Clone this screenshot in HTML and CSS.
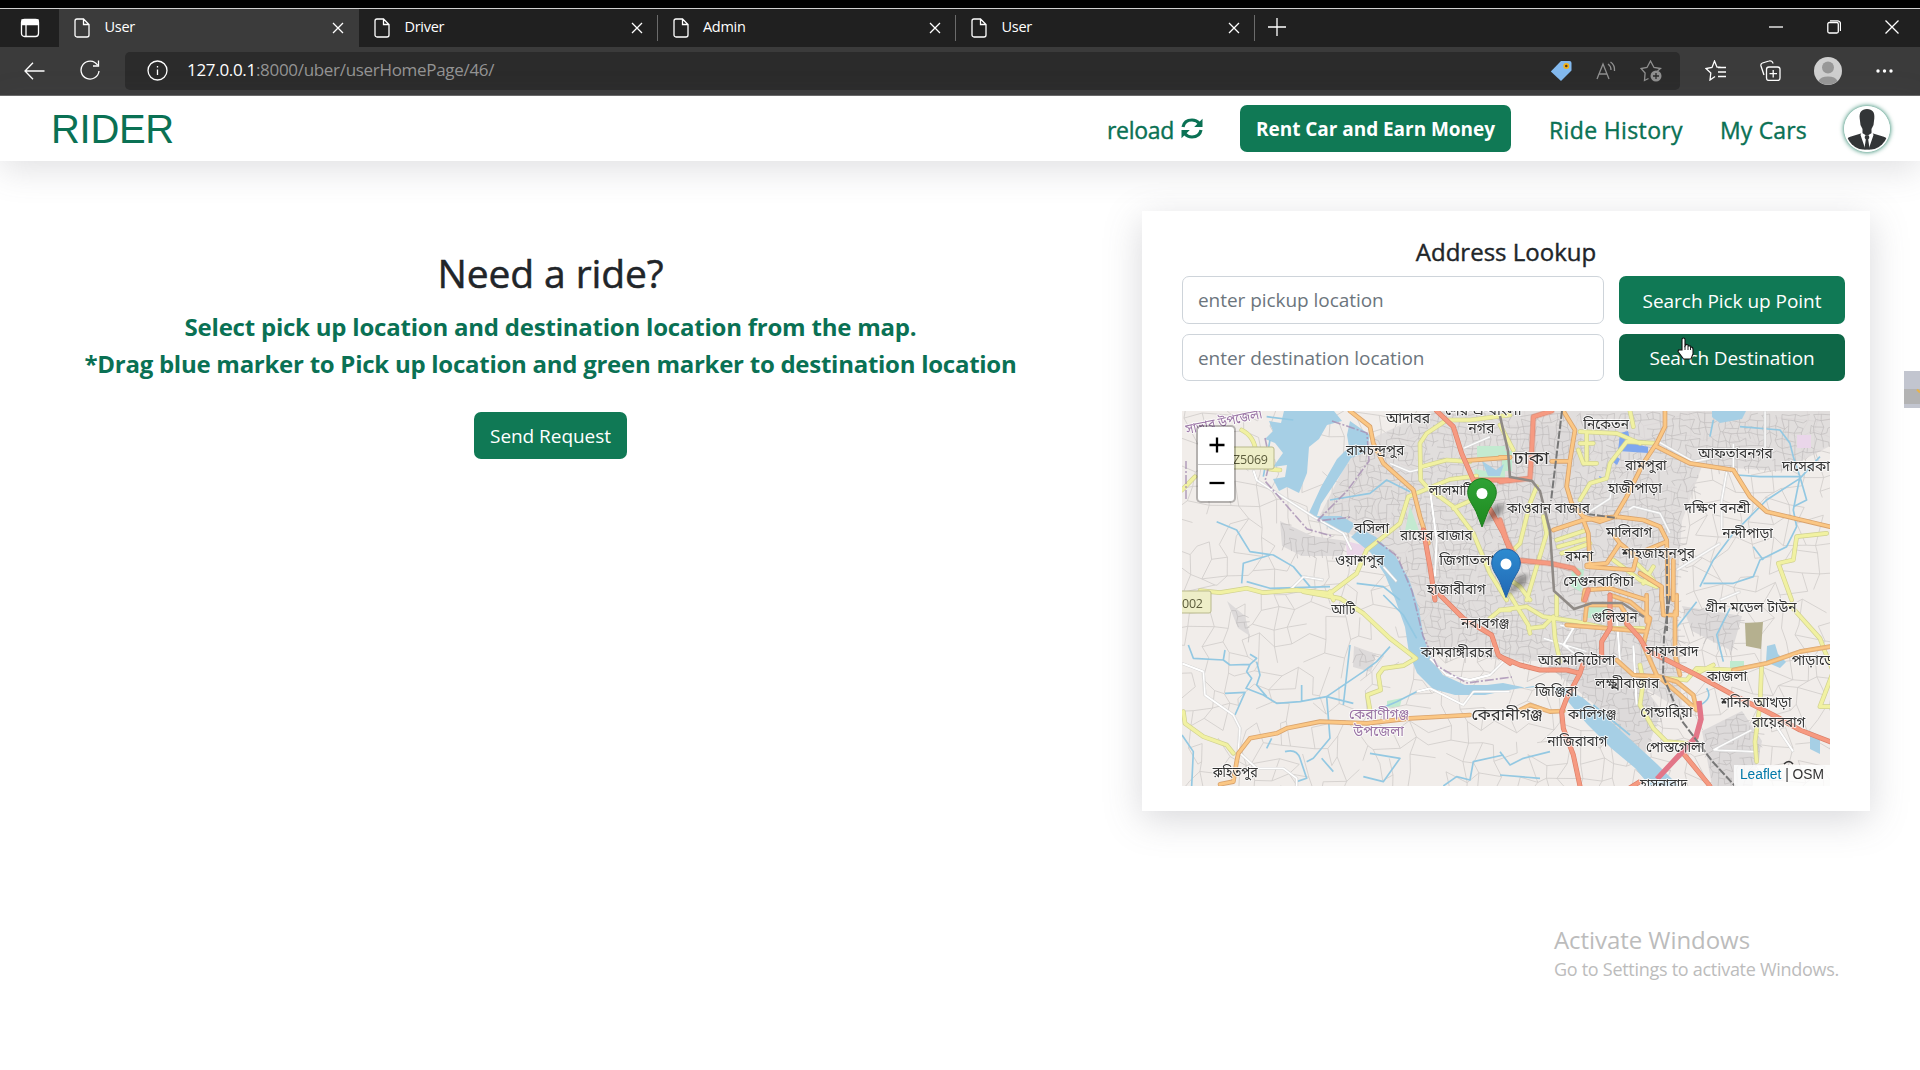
FILE: index.html
```html
<!DOCTYPE html>
<html lang="en">
<head>
<meta charset="utf-8">
<title>User</title>
<link rel="stylesheet" href="styles.css">
</head>
<body>
<svg class="defs" width="0" height="0">
  <symbol id="i-page" viewBox="0 0 16 20"><path d="M3 1h6.5L15 6.5V17a2 2 0 0 1-2 2H3a2 2 0 0 1-2-2V3a2 2 0 0 1 2-2zM9.5 1v5.5H15"/></symbol>
  <symbol id="i-x" viewBox="0 0 12 12"><path d="M1 1l10 10M11 1L1 11"/></symbol>
</svg>
<header class="browser">
  <div class="tabs">
    <div class="tab-menu"><svg class="ic" width="20" height="20" viewBox="0 0 20 20"><rect x="1.5" y="1.5" width="17" height="17" rx="3"/><path d="M2 2h16v4.500H2z" fill="#fff"/><path d="M6 6v12"/></svg></div>
    <div class="tab active"><svg class="ic" width="16" height="20"><use href="#i-page"/></svg><span>User</span><svg class="ic close" width="12" height="12"><use href="#i-x"/></svg></div>
    <div class="tab"><svg class="ic" width="16" height="20"><use href="#i-page"/></svg><span>Driver</span><svg class="ic close" width="12" height="12"><use href="#i-x"/></svg></div>
    <div class="tab"><svg class="ic" width="16" height="20"><use href="#i-page"/></svg><span>Admin</span><svg class="ic close" width="12" height="12"><use href="#i-x"/></svg></div>
    <div class="tab"><svg class="ic" width="16" height="20"><use href="#i-page"/></svg><span>User</span><svg class="ic close" width="12" height="12"><use href="#i-x"/></svg></div>
    <svg class="ic plus" width="18" height="18" viewBox="0 0 18 18"><path d="M9 0v18M0 9h18"/></svg>
    <div class="window-buttons">
      <svg class="ic" width="14" height="14" viewBox="0 0 14 14"><path d="M0 7h14"/></svg>
      <svg class="ic" width="14" height="14" viewBox="0 0 14 14"><rect x=".8" y="2.500" width="10.500" height="10.500" rx="1.500"/><path d="M3 .8h7.500a3 3 0 0 1 3 3V11"/></svg>
      <svg class="ic" width="14" height="14" viewBox="0 0 14 14"><path d="M.5.5l13 13M13.500.5l-13 13"/></svg>
    </div>
  </div>
  <div class="toolbar">
    <svg class="ic back" width="21" height="18" viewBox="0 0 21 18"><path d="M9 .8L1 9l8 8.200M1 9h19.500"/></svg>
    <svg class="ic refresh" width="20" height="21" viewBox="0 0 20 21"><path d="M17.500 5A9 9 0 1 0 19 11M18.500 .5V6H13"/></svg>
    <div class="address">
      <svg class="ic" width="21" height="21" viewBox="0 0 21 21"><circle cx="10.500" cy="10.500" r="9.500"/><path d="M10.500 9.500V15M10.500 6v1.500"/></svg>
      <span class="url"><b>127.0.0.1</b>:8000/uber/userHomePage/46/</span>
      <div class="address-icons">
        <svg width="22" height="22" viewBox="0 0 22 22"><path d="M11 1h8.500A2 2 0 0 1 21.500 3v7.500L11 21 .8 11.500z" fill="#83b9ee"/><circle cx="16.300" cy="6" r="3" fill="#f5b316"/><circle cx="16.300" cy="6" r="1.300" fill="#5a3a10"/></svg>
        <svg class="ic dim" width="20" height="19" viewBox="0 0 20 19"><path d="M1 18L7 3l6 15M3 13h8M12 3q3 2 3 6M14.500 1q4.500 3 4 9"/></svg>
        <svg class="ic dim" width="22" height="22" viewBox="0 0 22 22"><path d="M8.500 18.500L4.500 20.500l.6-7.500L1 8.500l6-1L10.500 1l3.500 6.500 6.500 1-3 2.500"/><circle cx="16" cy="16" r="5.500" fill="#909090" stroke="none"/><path d="M16 13v6M13 16h6" stroke="#2b2b2b"/></svg>
      </div>
    </div>
    <svg class="ic fav" width="21" height="21" viewBox="0 0 21 21"><path d="M10 16.500L5 20l.8-7L1 8.500l6-1L9.500 1 12 7.200h3.500M13 7.500h8M13 12h8M13 16.500h8"/></svg>
    <svg class="ic coll" width="21" height="21" viewBox="0 0 21 21"><path d="M4 15L1 6a2.500 2.500 0 0 1 1.500-3L9 1a3 3 0 0 1 4 2.500"/><rect x="6.500" y="7" width="13.500" height="13.500" rx="2.500"/><path d="M13.200 10v7.500M9.500 13.700H17"/></svg>
    <svg class="profile" width="28" height="28" viewBox="0 0 28 28"><circle cx="14" cy="14" r="14" fill="#cfcfcf"/><circle cx="14" cy="10.500" r="6" fill="#979797"/><path d="M4.500 24a10 6.500 0 0 1 19 0A14 14 0 0 1 4.500 24z" fill="#979797"/></svg>
    <svg class="dots" width="17" height="4" viewBox="0 0 17 4"><g fill="#fff"><circle cx="2" cy="2" r="1.700"/><circle cx="8.500" cy="2" r="1.700"/><circle cx="15" cy="2" r="1.700"/></g></svg>
  </div>
</header>

<nav class="navbar">
  <span class="brand">RIDER</span>
  <div class="nav-links">
    <a class="reload"><span>reload</span><svg width="22" height="21" viewBox="0 0 22 21"><g fill="none" stroke="#0a7154" stroke-width="3.200"><path d="M2 9C3 4 7 2 11 2c3 0 5.500 1.200 7.500 3.500"/><path d="M20 12c-1 5-5 7-9 7-3 0-5.500-1.200-7.500-3.500"/></g><path d="M21.500.8V9h-8.300zM.5 20.200V12h8.300z" fill="#0a7154"/></svg></a>
    <button class="btn rent"><span>Rent Car and Earn Money</span></button>
    <a class="history"><span>Ride History</span></a>
    <a class="cars"><span>My Cars</span></a>
    <svg class="avatar" width="46" height="46" viewBox="0 0 46 46"><defs><clipPath id="disc"><circle cx="23" cy="23" r="21.500"/></clipPath></defs><circle cx="23" cy="23" r="23" fill="#fff"/><g clip-path="url(#disc)"><path d="M23 3c5.500 0 8 3.500 7.300 9.500L29.500 19l-2 4v4l11.500 3.500c4 1.200 5 3.500 5 7.500v5.500H2V38c0-4 1-6.300 5-7.500L18.500 27v-4l-2-4-.8-6.500C15 6.500 17.500 3 23 3z" fill="#333537"/><path d="M17.500 26.500L23 30l5.500-3.500 1 2.500-5 14.500h-3L16.500 29z" fill="#fff"/><path d="M21 29.500h4l.3 2.500-1.100 1.500 1.500 10h-5.400l1.500-10-1.100-1.500z" fill="#333537"/></g></svg>
  </div>
</nav>

<main class="content">
  <section class="intro">
    <h2>Need a ride?</h2>
    <p class="lead">Select pick up location and destination location from the map.</p>
    <p class="hint">*Drag blue marker to Pick up location and green marker to destination location</p>
    <button class="btn send">Send Request</button>
  </section>
  <section class="card">
    <h5>Address Lookup</h5>
    <div class="lookup">
      <div class="field">enter pickup location</div>
      <button class="btn">Search Pick up Point</button>
      <div class="field">enter destination location</div>
      <button class="btn hover">Search Destination</button>
    </div>
    <div class="map">
      <svg width="648" height="375" viewBox="0 0 648 375">
        <defs>
          <g id="secondary">
            <g transform="translate(-12 -11) scale(.3333)">
              <path d="M215 90Q255 110 258 160T330 210M36 270L75 230M1020 45L900 60 830 60 770 100 750 130 752 240 775 265 850 320 910 400 960 520 1010 600M755 200L830 180 900 185M775 265L840 238 920 228M850 325L940 285M775 265L715 290 690 370 590 450 560 520 480 580 380 570 280 578 230 565 150 578 90 572M480 575L490 600"/>
            </g>
            <g transform="translate(318 -11) scale(.3333)">
              <path d="M390 33L400 80M470 130L380 125 330 190 320 235 270 250 240 300M240 95L350 100 420 130M240 130H280M235 150L250 190 290 190M260 100V180M110 260L90 310 60 430 20 470M130 350L140 400 110 500 80 600M0 75L40 150M0 520L60 560 90 600M170 420L260 390M175 440L265 415M185 460L270 430M340 480L420 540 470 560M410 490L460 540M430 550L460 500M980 400L890 410 880 480 835 490 875 600"/>
            </g>
            <g transform="translate(-12 184) scale(.3333)"><path d="M400 -10L510 10 580 55 660 130 738 190 700 212 640 220 625 240 632 285 592 300 600 345M40 350L45 385 100 425 170 450 190 475M960 70L990 45H1020"/></g>
            <g transform="translate(318 184) scale(.3333)"><path d="M0 45L80 35 130 65 230 80 320 100 430 100M30 0L60 50 85 90 90 115M85 100L130 95 160 65 165 130 180 200M170 0V60M420 210L430 260 420 330 460 400 500 440 560 445M500 250L560 255 590 220 700 225M870 30L960 130 975 170 1000 230 960 335 990 335M785 210L780 330 765 440 770 500M640 210L590 235"/></g>
          </g>
          <g id="primary">
            <g transform="translate(-12 -11) scale(.3333)"><path d="M540 33L600 80 610 130 640 190 730 270 750 350 775 430M885 182L1020 172"/></g>
            <g transform="translate(318 -11) scale(.3333)"><path d="M0 172H30M155 184H210M190 33L225 90 210 180 200 260 215 310 250 350 300 365 345 350 380 290 430 190 470 130 495 80V33M470 140L570 190 700 210 750 290 800 335 990 380M160 390L250 360 300 355 350 350 430 360 480 380 500 420 505 600M520 480V600M250 360L265 400 270 490M260 495L320 490 360 430 345 410M360 430L410 470 400 510 260 500M440 450L500 425M485 600V560L420 520M250 600L255 570 330 565 440 600"/></g>
            <g transform="translate(-12 184) scale(.3333)"><path d="M900 360L720 370 590 385 450 380 350 400 320 415 240 430 205 475 200 500 190 560 150 568"/></g>
            <g transform="translate(318 184) scale(.3333)"><path d="M200 90L440 110 450 70 390 20 330 0M255 75L260 30 360 30 380 60 380 90M440 0V80M485 0L490 60 530 60V0M525 50V180L540 240M430 150L470 240 540 300 590 345 580 300 530 260 480 245 400 240 350 195M440 110L430 150M700 225L800 205 900 170 990 155M60 345L90 330 150 350 190 348"/></g>
          </g>
          <g id="trunk">
            <g transform="translate(-12 -11) scale(.3333)"><path d="M800 33L850 80 875 160 910 240 970 345 1000 400 1020 450M910 240H1020M760 390L780 500 795 600"/></g>
            <g transform="translate(318 -11) scale(.3333)"><path d="M155 33L100 50 95 160 90 235 0 245M0 360L20 420 50 480 150 490 220 505 235 520M255 600L265 570"/></g>
            <g transform="translate(-12 184) scale(.3333)"><path d="M810 0L880 70 965 120 985 180 1020 205"/></g>
            <g transform="translate(318 184) scale(.3333)"><path d="M0 185L60 210 120 225 200 225 240 235 200 310 185 350 190 400 220 480 240 573M240 235L248 210M330 0V100L305 140 305 185M380 85L420 130 440 165 500 195 590 240 700 300 820 360 900 405 990 440M550 475L630 573M380 585L420 560"/></g>
          </g>
        </defs>
        <rect width="648" height="375" fill="#f1edea"/>
        <g id="lanes" class="lanes"></g>
        <g id="urban" fill="#dddada">
          <path d="M248 0H308L648 0V35L600 60 520 55 500 110 495 180 500 300 420 250 330 250 240 240 224 170 185 130 135 110 168 45 195 25Z" fill-opacity=".8"/>
          <path d="M308 240L390 245 450 260 480 300 460 350 420 300 360 250 300 240ZM520 320L560 300 580 330 570 375H530ZM172 235l22 8-5 18-18-5zM45 190l18 15 5 20-12-8z"/>
          <path d="M98 110L130 125 165 130 160 145 120 145 100 135ZM500 195L560 205 550 240 510 220ZM340 10L400 20V55L350 90Z"/>
        </g>
        <g id="streets" class="streets"></g>
        <g class="parks">
          <path d="M295 35h28v12h-28zM292 58l18 3 13-3v12h-29zM228 95l9 25h-14z" fill="#c3ead0"/>
          <path d="M320 40h10v20h-10zM390 155l12 4-3 22-10-6zM405 195h22v12h-22zM205 290l15-3-2 8-13 2zM548 250h14v10h-14z" fill="#bfead0"/>
          <path d="M563 212l18-1-2 27-15-3z" fill="#b5b08f"/><path d="M164 130l20 5-3 13-16-2z" fill="#ead6e8"/><path d="M615 24h14v13h-14z" fill="#ead6ea"/>
        </g>
        <g class="water">
          <path d="M102 0h50l8 10-15 4-8 14-10 8-2 26-8 20-12-6-8 4-6-12 12-2 2-12-14 2 10-14-8-10-10-4 8-8-4-10 12 2zM168 10l20 14-4 17-15 6-14 22-16 24-4 12 24 0 14 8-6 9-18-4-14-10-8-6 12-26 16-28 12-12-2-12z"/>
          <path d="M178 118l16 8 20 20 13 22 10 30 4 24 6 22 14 20 22 10h22l16-2 24 5 20-2 18 2 18 10 24 20 24 22 26 24 28 28h-30l-20-24-24-20-24-24-22-26-14-12-18 0-24 4-24 5-30 0-22-6-16-16-8-20-4-26-10-28-10-24-14-22-20-16z"/>
          <path d="M530 0h34l-4 8-22 4-8-6zM585 235l8-2 3 10 8 8-6 6-14-6zM628 320l10 5v18l-10-5z"/>
          <path d="M300 50l14 9 8-6-4 12h-12z"/>
          <path d="M438 22l8-2 3 12 17 4v6l-30-2zM432 44l6 4-3 6-4-3zM417 65l8 3-6 3z" fill="#7fa7ee"/>
        </g>
        <g class="creeks">
          <g transform="translate(-12 -11) scale(.3333)"><path d="M140 365L200 390 240 455 310 465 370 500 420 560M300 465L220 490 215 550M480 300L600 280 650 240 720 275M370 60L290 50M300 120L280 230M560 550L640 560 690 600M230 545L300 565 480 560"/></g>
          <g transform="translate(318 -11) scale(.3333)"><path d="M640 60L630 110M720 80L840 90 870 130 880 170 900 230 880 330 890 380 860 440 780 480 760 530 700 550 610 550M900 230L780 230 710 225M900 230L920 300 880 320M960 170L900 235 800 300 700 400 640 480 600 560M760 440L790 480"/></g>
          <g transform="translate(-12 184) scale(.3333)"><path d="M55 150L70 190 160 195 165 165M160 195L180 210 240 208 260 190 240 178M240 208L230 230 245 250 228 280 280 300 320 325 390 320 470 305 580 230 620 200 660 155M260 200L270 240 260 270 290 305M395 320V270M165 295L225 292 195 360M470 305L480 430 430 490 410 500M470 305L550 325M610 350L680 320 740 290M36 420L70 470 65 573M345 470Q380 460 390 490T410 550L380 560M290 460L305 430M580 545L640 560 690 490 600 475M455 490L490 530M820 573L860 545 900 555 910 500 1000 480M640 0L700 60 740 130M540 150L520 330"/></g>
          <g transform="translate(318 184) scale(.3333)"><path d="M0 470L30 510 70 490 150 470M690 40L650 120 670 200M590 20L520 110M280 330L390 420M0 540L120 550M620 280Q640 310 600 330"/></g>
        </g>
        <g class="minor">
          <g transform="translate(-12 -11) scale(.3333)"><path d="M250 210L260 240 430 350 520 400 545 450M360 570L400 530 460 540M660 190L720 215 780 200M640 500L680 545M780 270L800 420 795 530M880 145L960 110"/></g>
          <g transform="translate(318 -11) scale(.3333)"><path d="M475 125L580 185 630 175M795 33V145M700 130V205M680 215L665 300V390M260 340L330 295 340 240M385 330L400 320 480 340 510 400M530 510L660 430M660 600L720 575"/></g>
          <g transform="translate(-12 184) scale(.3333)"><path d="M36 205L100 230 105 300 190 360 210 400 205 470 260 520 340 520 380 550V573M740 290L780 280 830 305 880 330 910 290H1020M780 190L830 240 900 255 960 240 1010 190"/></g>
          <g transform="translate(318 184) scale(.3333)"><path d="M180 90L220 100 190 150 230 180M350 60L360 200 420 270M640 465L755 405M640 465L770 470M820 380L880 470M130 130L260 170M400 150L410 330"/></g>
        </g>
        <use href="#secondary" class="road secondary-case"/><use href="#secondary" class="road secondary"/>
        <use href="#primary" class="road primary-case"/><use href="#primary" class="road primary"/>
        <use href="#trunk" class="road trunk-case"/><use href="#trunk" class="road trunk"/>
        <path class="motorway" d="M517 290L519 308 514 326 475 368"/>
        <path class="rail-soft" d="M318 5L326 40 328 66 350 70 358 80 368 120 372 180 392 198 410 192 440 192 462 206"/>
        <path class="rail" d="M380 0L369 90M485 145V220M488 185L482 225 481 265 500 310 530 350 553 375M405 103L435 107"/>
        <path class="boundary" d="M150 10L185 22 187 50 165 80 135 110 170 106M83 27L88 50 83 70 105 95 125 118 150 125M195 130L215 145 230 180 241 225 255 255 285 272 330 266M4 88V50"/>
        <g class="shield"><rect x="28" y="36" width="64" height="22" rx="2"/><text x="51" y="53" textLength="35">Z5069</text><rect x="-10" y="180" width="39" height="22" rx="2"/><text x="0" y="197" textLength="21">002</text></g>
        <g class="labels">
          <g transform="translate(-12 -11) scale(.3333)">
            <text x="648" y="68" textLength="132">আদাবর</text><text x="825" y="45" textLength="230">শের-এ-বাংলা</text><text x="895" y="100" textLength="78">নগর</text>
            <text x="528" y="166" textLength="175">রামচন্দ্রপুর</text><text x="776" y="286" textLength="170">লালমাটিয়া</text><text x="552" y="398" textLength="106">বসিলা</text>
            <text x="690" y="420" textLength="218">রায়ের বাজার</text><text x="495" y="496" textLength="147">ওয়াশপুর</text><text x="808" y="496" textLength="165">জিগাতলা</text><text x="770" y="583" textLength="177">হাজারীবাগ</text>
            <text class="purple" x="50" y="103" textLength="234" transform="rotate(-12 50 103)">সাভার উপজেলা</text>
          </g>
          <g transform="translate(318 -11) scale(.3333)">
            <text x="250" y="88" textLength="137">নিকেতন</text><text class="city" x="40" y="193" textLength="107">ঢাকা</text><text x="375" y="210" textLength="125">রামপুরা</text>
            <text x="323" y="278" textLength="163">হাজীপাড়া</text><text x="595" y="174" textLength="223">আফতাবনগর</text><text x="846" y="213" textLength="190">দাসেরকান্দি</text>
            <text x="20" y="340" textLength="250">কাওরান বাজার</text><text x="318" y="410" textLength="138">মালিবাগ</text><text x="553" y="338" textLength="198">দক্ষিণ বনশ্রী</text>
            <text x="667" y="414" textLength="152">নন্দীপাড়া</text><text x="195" y="484" textLength="85">রমনা</text><text x="365" y="473" textLength="220">শাহজাহানপুর</text><text x="190" y="558" textLength="212">সেগুনবাগিচা</text>
          </g>
          <g transform="translate(-12 184) scale(.3333)">
            <text x="484" y="58" textLength="72">আটি</text><text x="873" y="100" textLength="145">নবাবগঞ্জ</text><text x="752" y="187" textLength="217">কামরাঙ্গীরচর</text>
            <text class="purple" x="537" y="373" textLength="180">কেরাণীগঞ্জ</text><text class="purple" x="550" y="422" textLength="152">উপজেলা</text>
            <text class="town" x="905" y="375" textLength="213">কেরানীগঞ্জ</text><text x="128" y="545" textLength="135">রুহিতপুর</text>
          </g>
          <g transform="translate(318 184) scale(.3333)">
            <text x="615" y="50" textLength="275">গ্রীন মডেল টাউন</text><text x="275" y="81" textLength="138">গুলিস্তান</text><text x="438" y="184" textLength="158">সায়দাবাদ</text>
            <text x="114" y="211" textLength="232">আরমানিটোলা</text><text x="875" y="211" textLength="190">পাড়াডেগার</text><text x="620" y="257" textLength="122">কাজলা</text>
            <text x="105" y="302" textLength="128">জিঞ্জিরা</text><text x="286" y="280" textLength="192">লক্ষ্মীবাজার</text><text x="662" y="335" textLength="213">শনির আখড়া</text>
            <text x="421" y="366" textLength="157">গেন্ডারিয়া</text><text x="203" y="372" textLength="146">কালিগঞ্জ</text><text x="756" y="397" textLength="160">রায়েরবাগ</text>
            <text x="142" y="452" textLength="180">নাজিরাবাগ</text><text x="438" y="470" textLength="176">পোস্তগোলা</text><text x="420" y="582" textLength="142">হাসনাবাদ</text>
          </g>
          <path d="M602 353q5-5 9 0" fill="none" stroke="#333" stroke-width="1.500"/>
        </g>
        <defs>
          <linearGradient id="gg" x2="0" y2="1"><stop stop-color="#2fa236"/><stop offset="1" stop-color="#1e8a1f"/></linearGradient>
          <linearGradient id="gb" x2="0" y2="1"><stop stop-color="#2e8bd0"/><stop offset="1" stop-color="#2168b4"/></linearGradient>
          <filter id="soft"><feGaussianBlur stdDeviation="2"/></filter>
          <path id="pin" d="M15 .6C7 .6 .7 7 .7 14.500.7 21 5 25.500 9 33.500L15 49l6-15.500c4-8 8.300-12.500 8.300-19C29.300 7 23 .6 15 .6z"/>
        </defs>
        <g transform="translate(285 67)"><path d="M15 48L27 27 38 26 34 36z" opacity=".35" filter="url(#soft)"/><use href="#pin" fill="url(#gg)" stroke="#1b7d1d"/><circle cx="15" cy="15.500" r="5.500" fill="#fff"/></g>
        <g transform="translate(309 137.500)"><path d="M15 48L27 27 38 26 34 36z" opacity=".35" filter="url(#soft)"/><use href="#pin" fill="url(#gb)" stroke="#2463a5"/><circle cx="15" cy="15.500" r="5.500" fill="#fff"/></g>
      </svg>
      <div class="zoom"><button><svg width="16" height="16" viewBox="0 0 16 16"><path d="M8 .5v15M.5 8h15"/></svg></button><button><svg width="16" height="16" viewBox="0 0 16 16"><path d="M.5 8h15"/></svg></button></div>
      <div class="attribution"><a>Leaflet</a> | OSM</div>
    </div>
  </section>
</main>

<div class="activate"><p class="a1">Activate Windows</p><p class="a2">Go to Settings to activate Windows.</p></div>
<svg class="side-tab" width="16" height="37" viewBox="0 0 16 37"><rect width="16" height="18" fill="#c2c5cf"/><rect y="18" width="16" height="15" fill="#b3b3b3"/><rect y="33" width="16" height="4" fill="#c2c5cf"/><path d="M13 18.500l3 3" stroke="#e9b44a" stroke-width="2"/></svg>
<svg class="cursor" width="17" height="24" viewBox="0 0 17 24"><path d="M5 13V2.500a1.500 1.500 0 0 1 3 0V9l1-1.500 2 .5.500 1 2 0 .5 1 1.500.5.5 1.500v5L14 22H6.500L1 14.500 1.500 13 3 12.800z" fill="#fff" stroke="#111" stroke-width="1.100"/><path d="M8 9v4M11 9v4M13.500 10v3" stroke="#111" stroke-width=".9"/></svg>
<script src="map.js"></script>
</body>
</html>
```
FILE: styles.css
```css
* { box-sizing: border-box; }
body { margin: 0; width: 1920px; height: 1070px; overflow: hidden; background: #fff; color: #212529; font-family: "Open Sans", "Noto Sans", sans-serif; position: relative; }
.defs { position: absolute; }
span, a, p, h2, h5, .btn { white-space: nowrap; }
.ic { fill: none; stroke: #fff; stroke-width: 1.3; flex: none; }
.ic.dim { stroke: #909090; }

.browser { height: 96px; background: #3b3b3b; border-top: 8px solid #000; border-bottom: 1px solid #6a6a6a; }
.tabs { height: 39px; border-top: 1px solid #d0d0d0; background: #202020; display: flex; align-items: center; color: #fff; font-size: 14.5px; letter-spacing: -.3px; }
.tab-menu { width: 59px; height: 38px; padding-left: 20px; display: flex; align-items: center; border-radius: 0 0 6px 0; }
.tab { width: 298.5px; height: 26px; padding: 0 14px 0 15px; display: flex; align-items: center; gap: 14.5px; border-right: 1px solid #6b6b6b; }
.tab span { padding-bottom: 3px; }
.tab svg { margin-bottom: 1px; }
.tab.active { width: 300px; height: 38px; background: #3b3b3b; border-right: 0; padding-right: 15px; }
.tab .close { margin-left: auto; }
.plus { margin: 0 0 2px 13px; }
.window-buttons { margin-left: auto; display: flex; gap: 44px; padding: 0 21px 2px 0; }
.toolbar { height: 47px; display: flex; align-items: center; padding-left: 24px; }
.refresh { margin-left: 35px; }
.address { width: 1555px; height: 38px; margin-left: 25px; border-radius: 5px; background: #2b2b2b; display: flex; align-items: center; padding: 0 18px 0 22px; }
.url { margin-left: 19px; padding-bottom: 2px; color: #949494; font-size: 17px; letter-spacing: -.31px; }
.url b { color: #fff; font-weight: 400; }
.address-icons { margin-left: auto; display: flex; align-items: center; gap: 24px; }
.fav { margin-left: 25px; }
.coll { margin-left: 34px; }
.profile { margin-left: 33px; }
.dots { margin-left: 34px; }

.navbar { height: 65px; background: #fff; padding: 0 30px 0 51px; display: flex; align-items: center; justify-content: space-between; box-shadow: 0 8.5px 35px rgba(100, 100, 111, .2); color: #0a7154; position: relative; }
.brand { font: 40px/48px "Liberation Sans", sans-serif; letter-spacing: -.3px; }
.nav-links { display: flex; align-items: center; font-size: 23px; }
.nav-links a { -webkit-text-stroke: .4px; }
.nav-links a span { padding-top: 2px; }
.reload { display: flex; align-items: center; gap: 7px; letter-spacing: -.3px; }
.rent { margin: 0 38px 0 37px; width: 271px; font-weight: 700; letter-spacing: -.08px; }
.history { letter-spacing: .36px; padding-top: 2px; }
.cars { margin: 0 37px; letter-spacing: .17px; padding-top: 2px; }
.avatar { border-radius: 50%; box-shadow: 0 0 5px #0a7154; }
.btn { height: 47px; border: 0; border-radius: 7px; background: #107955; color: #fff; font-family: inherit; font-size: 19px; padding: 1px 0 0; text-align: center; letter-spacing: -.04px; }
.btn.hover { background: #0e6747; padding-top: 0; letter-spacing: -.11px; }

.content { display: flex; justify-content: space-between; padding: 50px 50px 0 0; }
.intro { width: 1101px; padding-top: 33px; display: flex; flex-direction: column; align-items: center; }
h2, h5, p { margin: 0; font-weight: 400; }
h2 { font-size: 39px; line-height: 58px; letter-spacing: -.11px; -webkit-text-stroke: .5px; }
.intro p { font-size: 24px; line-height: 37px; font-weight: 700; color: #0a7154; letter-spacing: -.22px; }
.intro .lead { margin-top: 6px; }
.intro .hint { letter-spacing: -.264px; }
.send { width: 153px; margin-top: 30px; }
.card { width: 728px; height: 600px; background: #fff; box-shadow: 0 8.5px 35px rgba(100, 100, 111, .25); padding: 23px 25px 0 40px; }
h5 { font-size: 24px; line-height: 36px; text-align: center; padding-right: 15px; -webkit-text-stroke: .4px; }
.lookup { display: grid; grid-template-columns: 422px 226px; grid-template-rows: 48px 47px; gap: 10px 15px; margin-top: 6px; }
.lookup .btn { height: auto; }
.field { border: 1px solid #ced4da; border-radius: 7px; padding: 0 15px; display: flex; align-items: center; font-size: 19px; letter-spacing: -.05px; color: #6c757d; }
.map { position: relative; width: 648px; height: 375px; margin-top: 30px; overflow: hidden; }
.map > svg { display: block; }
.zoom { position: absolute; left: 14px; top: 14px; width: 40px; border: 2px solid rgba(0,0,0,.25); border-radius: 5px; background: #fff; background-clip: padding-box; }
.zoom button { display: flex; align-items: center; justify-content: center; width: 36px; height: 37px; border: 0; padding: 0 0 1px 1px; background: none; }
.zoom button + button { border-top: 1px solid #ccc; }
.zoom svg { stroke: #000; stroke-width: 2.3; }
.attribution { position: absolute; right: 0; bottom: 0; padding: 0 6px; height: 21px; background: rgba(255,255,255,.8); font: 13.8px/19px "Liberation Sans", sans-serif; color: #333; }
.attribution a { color: #0078a8; }
.lanes { fill: none; stroke: #cfcbc9; stroke-width: .8; }
.streets { fill: none; stroke: #bcb8b8; stroke-width: .6; }
.water { fill: #a6cfe5; }
.creeks { fill: none; stroke: #93c8e2; stroke-width: 5; stroke-linejoin: round; }
.minor { fill: none; stroke: #fff; stroke-width: 7; stroke-linejoin: round; filter: drop-shadow(0 0 .5px #999); }
.road { fill: none; stroke-linejoin: round; stroke-linecap: round; }
.secondary-case { stroke: #d0d190; stroke-width: 14; }
.secondary { stroke: #f1f1a2; stroke-width: 10; }
.primary-case { stroke: #d9a36d; stroke-width: 14; }
.primary { stroke: #fbc784; stroke-width: 9; }
.trunk-case { stroke: #dc8069; stroke-width: 15; }
.trunk { stroke: #f69a81; stroke-width: 11; }
.motorway { fill: none; stroke: #e27688; stroke-width: 5.5; }
.rail { fill: none; stroke: #777; stroke-width: 2; stroke-dasharray: 8 2; }
.rail-soft { fill: none; stroke: #8f8a86; stroke-width: 2.6; }
.boundary { fill: none; stroke: #a68fb3; stroke-width: 1.6; stroke-dasharray: 9 2 2 2; opacity: .8; }
.shield rect { fill: #eeeec8; stroke: #b9b98c; }
.shield text { font-size: 12.5px; fill: #5c5c3c; }
.labels { font-family: "Noto Sans Bengali", "Noto Sans", sans-serif; font-size: 42px; fill: #333; }
.labels text { paint-order: stroke; stroke: rgba(255,255,255,.75); stroke-width: 6; stroke-linejoin: round; }
.labels .city { font-size: 52px; }
.labels .town { font-size: 48px; }
.labels .purple { fill: #9a74a5; }

.activate { position: absolute; left: 1554px; top: 922px; color: #bcbcbc; }
.a1 { font-size: 24px; line-height: 36px; letter-spacing: -.06px; }
.a2 { font-size: 18px; line-height: 23px; letter-spacing: -.284px; }
.side-tab { position: absolute; right: 0; top: 371px; }
.cursor { position: absolute; left: 1677px; top: 337px; }
```
FILE: map.js
```js
// Place names are stretched as whole words, so the headline of the script stays joined.
document.querySelectorAll('.labels text').forEach(t => t.setAttribute('lengthAdjust', 'spacingAndGlyphs'));

// Draws the dense street network beneath the main roads, from a fixed seed.
(function () {
  let seed = 7;
  const rnd = () => (seed = (seed * 16807) % 2147483647) / 2147483647;
  const urban = [...document.querySelectorAll('#urban path')];
  const inside = (x, y) => urban.some(p => p.isPointInFill(new DOMPoint(x, y)));
  function net(step, jitter, chance, test) {
    const cols = Math.ceil(648 / step) + 2, rows = Math.ceil(375 / step) + 2, pts = [];
    for (let r = 0; r < rows; r++) {
      pts.push([]);
      for (let c = 0; c < cols; c++) pts[r].push([(c - .5 + (rnd() - .5) * jitter) * step, (r - .5 + (rnd() - .5) * jitter) * step]);
    }
    let d = '';
    for (let r = 0; r < rows - 1; r++) for (let c = 0; c < cols - 1; c++) {
      const a = pts[r][c];
      if (!test(a[0], a[1])) continue;
      for (const b of [pts[r][c + 1], pts[r + 1][c]])
        if (rnd() < chance) d += 'M' + a.map(v => v.toFixed(1)) + 'L' + b.map(v => v.toFixed(1));
    }
    return d;
  }
  function add(id, d) {
    const p = document.createElementNS('http://www.w3.org/2000/svg', 'path');
    p.setAttribute('d', d);
    document.getElementById(id).appendChild(p);
  }
  add('lanes', net(17, .9, .66, () => true));
  add('streets', net(6.5, .7, .7, inside));
})();
```
